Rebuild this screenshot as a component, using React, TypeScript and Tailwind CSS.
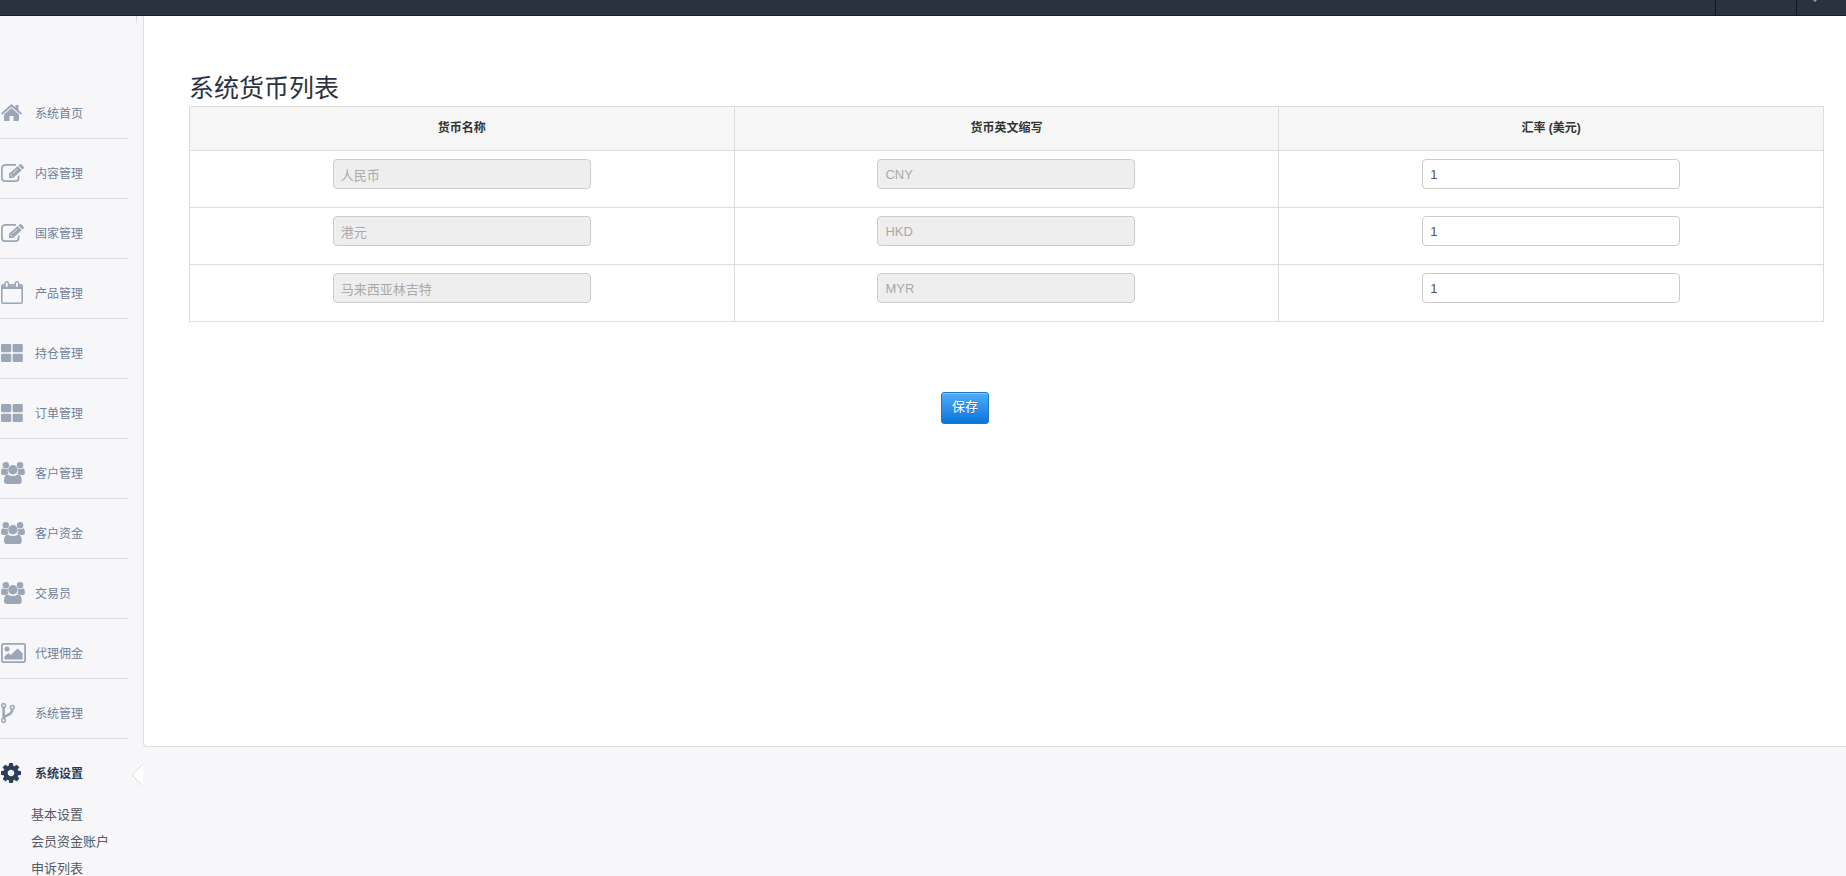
import React from "react";

const FONT = "font-['Liberation_Sans','Noto_Sans_CJK_SC',sans-serif]";

const MENU = [
  { icon: "home", label: "系统首页" },
  { icon: "edit", label: "内容管理" },
  { icon: "edit", label: "国家管理" },
  { icon: "calendar", label: "产品管理" },
  { icon: "blocks", label: "持仓管理" },
  { icon: "blocks", label: "订单管理" },
  { icon: "group", label: "客户管理" },
  { icon: "group", label: "客户资金" },
  { icon: "group", label: "交易员" },
  { icon: "picture", label: "代理佣金" },
  { icon: "fork", label: "系统管理" },
];

const SUBMENU = ["基本设置", "会员资金账户", "申诉列表"];

const CURRENCIES = [
  { name: "人民币", code: "CNY", rate: "1" },
  { name: "港元", code: "HKD", rate: "1" },
  { name: "马来西亚林吉特", code: "MYR", rate: "1" },
];

function Icon({ name }: { name: string }) {
  switch (name) {
    case "home":
      return (
        <svg viewBox="0 0 21 17" className="h-[17px] w-[21px]" fill="currentColor" aria-hidden="true">
          <path d="M10.500 0 14.500 3.600V1h3v5.300L21 9.300 19.800 10.800 10.500 2.700 1.200 10.800 0 9.300z" />
          <path d="M10.500 4 18 10.500V16a1 1 0 0 1-1 1h-4.500v-5h-4v5H4a1 1 0 0 1-1-1v-5.500z" />
        </svg>
      );
    case "edit":
      return (
        <svg viewBox="0 0 23 18" className="h-[18px] w-[23px]" fill="currentColor" aria-hidden="true">
          <path
            d="M15 .9H4A3.100 3.100 0 0 0 .9 4v10A3.100 3.100 0 0 0 4 17.100h10.500a3.100 3.100 0 0 0 3.100-3.100v-2.500"
            fill="none"
            stroke="currentColor"
            strokeWidth="1.700"
          />
          <path d="M8 14v-4.200l8.700-7.700 4 4.200-8.500 7.700z" />
          <path d="M17.500 1.400 18.700.4q.9-.7 1.800.1l2.100 2.200q.7.900-.1 1.700l-1.100 1z" />
          <path d="m11.500 9.500 4.800-4.300M9.200 10.500l2.300 2.300" stroke="#f7f7f9" strokeWidth=".8" />
        </svg>
      );
    case "calendar":
      return (
        <svg viewBox="0 0 22 23" className="h-[23px] w-[22px]" aria-hidden="true">
          <rect x=".8" y="3.800" width="20.400" height="18.400" rx="1.500" fill="none" stroke="currentColor" strokeWidth="1.600" />
          <path d="M1 4.500h20V8H1z" fill="currentColor" />
          <rect x="4" y=".8" width="3.400" height="6" rx="1.700" fill="#f7f7f9" stroke="currentColor" strokeWidth="1.400" />
          <rect x="14.200" y=".8" width="3.400" height="6" rx="1.700" fill="#f7f7f9" stroke="currentColor" strokeWidth="1.400" />
        </svg>
      );
    case "blocks":
      return (
        <svg viewBox="0 0 22 18" className="h-[18px] w-[22px]" fill="currentColor" aria-hidden="true">
          <rect width="10.200" height="8.300" rx="1.300" />
          <rect x="11.600" width="10.200" height="8.300" rx="1.300" />
          <rect y="9.700" width="10.200" height="8.300" rx="1.300" />
          <rect x="11.600" y="9.700" width="10.200" height="8.300" rx="1.300" />
        </svg>
      );
    case "group":
      return (
        <svg viewBox="0 0 24 22" className="h-[22px] w-6" fill="currentColor" aria-hidden="true">
          <circle cx="4.800" cy="3.200" r="3.200" />
          <circle cx="19.100" cy="3.200" r="3.200" />
          <path d="M1.600 6.200Q4.500 8 7 6.800q-1 3 .8 5.200Q6 12 4.800 13H2Q0 13 0 11q0-4 1.600-4.800z" />
          <path d="M22.300 6.200q-2.900 1.800-5.400.6 1 3-.8 5.200 1.800 0 3 1h2.800q2 0 2-2 0-4-1.600-4.800z" />
          <circle cx="11.900" cy="7.800" r="4.700" />
          <path d="M6.600 12.500q5.300 3 10.600 0 3.600.5 3.600 6.500 0 3-3 3H6q-3 0-3-3 0-6 3.600-6.500z" />
        </svg>
      );
    case "picture":
      return (
        <svg viewBox="0 0 25 20" className="h-5 w-[25px]" fill="currentColor" aria-hidden="true">
          <rect x=".9" y=".9" width="23.200" height="18.200" rx="1.500" fill="none" stroke="currentColor" strokeWidth="1.800" />
          <circle cx="6" cy="6" r="2.500" />
          <path d="M3.300 16.500v-2.700l4-3.800 2.500 2L16.500 5.500l5.200 5v6z" />
        </svg>
      );
    case "fork":
      return (
        <svg viewBox="0 0 14 20" className="h-5 w-3.5" fill="none" stroke="currentColor" aria-hidden="true">
          <path d="M2.600 4v12M11.300 6q0 4-3.500 5.500T3 14.500" strokeWidth="2.500" />
          <g fill="#f7f7f9" strokeWidth="1.500">
            <circle cx="2.600" cy="2.600" r="1.900" />
            <circle cx="11.300" cy="4.300" r="1.900" />
            <circle cx="2.600" cy="17.400" r="1.900" />
          </g>
        </svg>
      );
    default:
      return (
        <svg viewBox="128 128 1536 1536" className="h-5 w-5" fill="currentColor" aria-hidden="true">
          <path d="M1152 896q0-106-75-181t-181-75-181 75-75 181 75 181 181 75 181-75 75-181zm512-109v222q0 12-8 23t-20 13l-185 28q-19 54-39 91 35 50 107 138 10 12 10 25t-9 23q-27 37-99 108t-94 71q-12 0-26-9l-138-108q-44 23-91 38-16 136-29 186-7 28-36 28h-222q-14 0-24.500-8.500t-11.500-21.500l-28-184q-49-16-90-37l-141 107q-10 9-25 9-14 0-25-11-126-114-165-168-7-10-7-23 0-12 8-23 15-21 51-66.500t54-70.500q-27-50-41-99l-183-27q-13-2-21-12.500t-8-23.500v-222q0-12 8-23t19-13l186-28q14-46 39-92-40-57-107-138-10-12-10-24 0-10 9-23 26-36 98.500-107.500t94.500-71.500q13 0 26 10l138 107q44-23 91-38 16-136 29-186 7-28 36-28h222q14 0 24.500 8.500t11.500 21.500l28 184q49 16 90 37l142-107q9-9 24-9 13 0 25 10 129 119 165 170 7 8 7 22 0 12-8 23-15 21-51 66.500t-54 70.500q26 50 41 98l183 28q13 2 21 12.500t8 23.500z" />
        </svg>
      );
  }
}

function MenuLink({ icon, label, active }: { icon: string; label: string; active?: boolean }) {
  return (
    <a
      href="#"
      className={
        active
          ? "flex h-[60px] items-center pt-2.5 pl-px text-xs font-bold text-[#2d3a53]"
          : "flex h-[60px] items-center pt-2.5 pl-px text-xs text-[#6e7f99]"
      }
    >
      <span className={active ? "mb-[3px] flex w-[34px] text-[#2d3e5a]" : "mb-[3px] flex w-[34px] text-[#9ba6b7]"}>
        <Icon name={icon} />
      </span>
      {label}
    </a>
  );
}

function Sidebar() {
  return (
    <nav className="relative w-[143px] shrink-0 pt-[63px]">
      {/* End of the rail that runs under the header */}
      <div className="absolute top-0 right-1.5 h-2.5 w-px bg-linear-to-b from-[#cfd3d8] to-[#f7f7f9]" />
      <ul>
        {MENU.map((item) => (
          <li key={item.label} className="mr-[15px] h-[60px] border-b border-[#dfe0e2]">
            <MenuLink icon={item.icon} label={item.label} />
          </li>
        ))}
        <li className="relative">
          <MenuLink icon="cog" label="系统设置" active />
          {/* Arrow pointing at the active entry */}
          <svg viewBox="0 0 12 24" className="absolute top-6 right-0 h-6 w-3" aria-hidden="true">
            <path d="M12 1 1 12l11 11z" fill="#fff" />
            <path d="M11.500 1.500 1 12l10.500 10.500" fill="none" stroke="#dcdcdc" />
          </svg>
          <ul className="pt-0.5 pl-[31px]">
            {SUBMENU.map((label) => (
              <li key={label}>
                <a href="#" className="block text-[13px] leading-[27px] text-[#555a63]">
                  {label}
                </a>
              </li>
            ))}
          </ul>
        </li>
      </ul>
    </nav>
  );
}

function Field({ label, value, disabled }: { label: string; value: string; disabled?: boolean }) {
  return (
    <input
      type="text"
      aria-label={label}
      defaultValue={value}
      disabled={disabled}
      className="mx-auto block h-[30px] w-[258px] rounded border border-[#ccc] bg-white px-[7px] text-[13px] text-[#555] disabled:bg-[#eee] disabled:text-[#aaa]"
    />
  );
}

function CurrencyTable() {
  return (
    <table className="w-full table-fixed border-collapse">
      <thead>
        <tr className="h-11 bg-[#f6f6f6] text-xs text-[#333]">
          <th className="border border-[#ddd] pb-0.5">货币名称</th>
          <th className="border border-[#ddd] pb-0.5">货币英文缩写</th>
          <th className="border border-[#ddd] pb-0.5">汇率 (美元)</th>
        </tr>
      </thead>
      <tbody>
        {CURRENCIES.map((c) => (
          <tr key={c.code} className="h-[57px]">
            <td className="border border-[#ddd] pt-2 align-top">
              <Field label="货币名称" value={c.name} disabled />
            </td>
            <td className="border border-[#ddd] pt-2 align-top">
              <Field label="货币英文缩写" value={c.code} disabled />
            </td>
            <td className="border border-[#ddd] pt-2 align-top">
              <Field label="汇率 (美元)" value={c.rate} />
            </td>
          </tr>
        ))}
      </tbody>
    </table>
  );
}

export default function App() {
  return (
    <div className={`${FONT} flex h-screen flex-col overflow-hidden bg-[#f7f7f9]`}>
      <header className="flex h-4 shrink-0 justify-end border-b border-[#171c26] bg-[#2b323f]">
        <div className="w-[81px] border-l border-[#121722]" />
        <div className="w-[50px] border-l border-[#121722] pl-4">
          <svg viewBox="0 0 4 2" className="h-0.5 w-1" aria-hidden="true">
            <path d="M0 0h4L2 2z" fill="#9aa0aa" />
          </svg>
        </div>
      </header>
      <div className="flex flex-1">
        <Sidebar />
        <main className="min-h-[731px] flex-1 self-start rounded-bl border-b border-l border-[#dfdfdf] bg-white pt-14 pr-[22px] pl-[45px]">
          <h1 className="h-[34px] text-[25px] leading-8 text-[#2b323f]">系统货币列表</h1>
          <CurrencyTable />
          <div className="flex pt-[70px] pl-[46%]">
            <button
              type="button"
              className="h-8 w-12 rounded-[3px] border border-[#1f77c4] bg-linear-to-b from-[#4dadf9] to-[#0474dc] pb-0.5 text-[13px] text-white shadow-[inset_0_1px_0_#83c5fa] text-shadow-2xs"
            >
              保存
            </button>
          </div>
        </main>
      </div>
    </div>
  );
}
